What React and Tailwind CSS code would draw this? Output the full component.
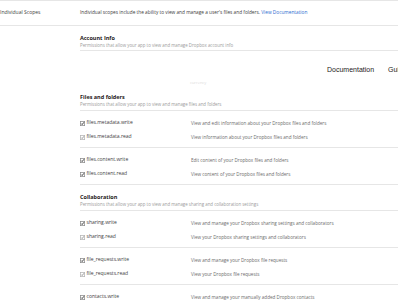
const sections = [
  {
    title: 'Files and folders',
    sub: 'Permissions that allow your app to view and manage files and folders',
    groups: [
      [
        { name: 'files.metadata.write', desc: 'View and edit information about your Dropbox files and folders' },
        { name: 'files.metadata.read', desc: 'View information about your Dropbox files and folders', dim: true },
      ],
      [
        { name: 'files.content.write', desc: 'Edit content of your Dropbox files and folders' },
        { name: 'files.content.read', desc: 'View content of your Dropbox files and folders' },
      ],
    ],
  },
  {
    title: 'Collaboration',
    sub: 'Permissions that allow your app to view and manage sharing and collaboration settings',
    groups: [
      [
        { name: 'sharing.write', desc: 'View and manage your Dropbox sharing settings and collaborators' },
        { name: 'sharing.read', desc: 'View your Dropbox sharing settings and collaborators', dim: true },
      ],
      [
        { name: 'file_requests.write', desc: 'View and manage your Dropbox file requests' },
        { name: 'file_requests.read', desc: 'View your Dropbox file requests', dim: true },
      ],
      [
        { name: 'contacts.write', desc: 'View and manage your manually added Dropbox contacts' },
        { name: 'contacts.read', desc: 'View your manually added Dropbox contacts', dim: true },
      ],
    ],
  },
]

function Check({ dim }) {
  return (
    <svg width="5" height="5" viewBox="0 0 10 10" className="shrink-0">
      <rect x="0.75" y="0.75" width="8.5" height="8.5" fill="#fff" stroke={dim ? '#b5b5b5' : '#8c8c8c'} strokeWidth="1.5" />
      <path d="M2.4 5.2 L4.3 7.1 L7.8 2.6" fill="none" stroke={dim ? '#8f8f8f' : '#2b2b2b'} strokeWidth="1.8" />
    </svg>
  )
}

function SectionHead({ title, sub, h = 'h-[26px]' }) {
  return (
    <div className={`${h} pt-[9px] border-b border-[#e6e6e6]`}>
      <div className="text-[5.5px] leading-[7px] font-bold text-[#1e1919]">{title}</div>
      <div className="text-[4.4px] leading-[6px] text-[#9b9b9b]">{sub}</div>
    </div>
  )
}

function Group({ rows }) {
  return (
    <div className="pt-[5px] pb-[3px] border-b border-[#e6e6e6]">
      {rows.map(r => (
        <div key={r.name} className="h-[14px] grid grid-cols-[111px_1fr] items-center">
          <div className="flex items-center gap-[1.5px]">
            <Check dim={r.dim} />
            <span className="text-[5px] text-[#3d3d3d]">{r.name}</span>
          </div>
          <span className="text-[4.6px] text-[#6b6b6b]">{r.desc}</span>
        </div>
      ))}
    </div>
  )
}

export default function App() {
  return (
    <div className="w-[398px] h-[300px] overflow-hidden bg-white font-['Open_Sans',sans-serif]">
      {/* Scope type row */}
      <div className="h-[26px] flex items-center border-y border-[#e6e6e6]">
        <div className="w-[80px] text-[5px] text-[#3d3d3d]">Individual Scopes</div>
        <div className="text-[4.75px] text-[#3d3d3d]">
          Individual scopes include the ability to view and manage a user's files and folders.{' '}
          <span className="text-[#2d6bd0]">View Documentation</span>
        </div>
      </div>

      <div className="pl-[80px]">
        <SectionHead title="Account Info" sub="Permissions that allow your app to view and manage Dropbox account info" h="h-[25px]" />

        {/* sticky docs nav sitting over the account rows */}
        <div className="h-[34px] overflow-hidden">
          <div className="flex gap-[14px] pt-[14px] pl-[247px] whitespace-nowrap font-['Liberation_Sans',sans-serif] text-[7px] leading-[9px] text-[#1e1919]">
            <span>Documentation</span>
            <span>Guides</span>
          </div>
          <div className="pl-[110px] mt-[6px] text-[4px] leading-[5px] text-[#dcdcdc]">currency</div>
        </div>

        {sections.map(s => (
          <div key={s.title}>
            <SectionHead title={s.title} sub={s.sub} />
            {s.groups.map((g, i) => (
              <Group key={i} rows={g} />
            ))}
          </div>
        ))}
      </div>
    </div>
  )
}
